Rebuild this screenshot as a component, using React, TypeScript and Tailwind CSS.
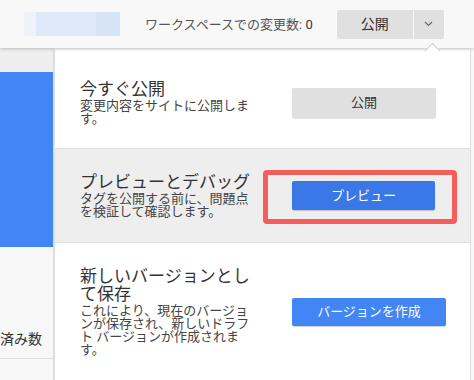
import React from 'react';

const font = { fontFamily: '"Roboto", "Noto Sans CJK JP", sans-serif' };

function Chevron() {
  return (
    <svg width="9" height="6" viewBox="0 0 9 6" className="text-[#666]">
      <polyline points="1,1 4.5,4.5 8,1" fill="none" stroke="currentColor" strokeWidth="1.1" />
    </svg>
  );
}

function TopBar() {
  return (
    <div className="relative z-20 h-[48px] flex items-center bg-[#f8f8f8] shadow-[0_1px_3px_rgba(0,0,0,0.22)]">
      {/* blurred logo */}
      <div className="ml-[24px] flex h-[24px]">
        <div className="w-[12px] bg-[#eef2f9]" />
        <div className="w-[60px] bg-[#dde8f8]" />
        <div className="w-[24px] bg-[#d6e3f7]" />
      </div>
      <div className="ml-[25px] text-[13px] text-[#555] leading-none">
        ワークスペースでの変更数: <span className="text-[#333]">0</span>
      </div>
      <div className="ml-[24px] flex gap-[1px]">
        <button className="w-[76px] h-[29px] rounded-l-[2px] bg-[#e0e0e0] text-[14px] text-[#333]">公開</button>
        <button className="w-[30px] h-[29px] rounded-r-[2px] bg-[#e0e0e0] flex items-center justify-center">
          <Chevron />
        </button>
      </div>
    </div>
  );
}

function Sidebar() {
  return (
    <div className="w-[54px] h-[332px] border-r border-[#ddd] flex flex-col overflow-hidden">
      <div className="h-[24px] bg-[#eeeeee]" />
      <div className="h-[175px] bg-[#4285f4]" />
      <div className="h-[112px] border-b border-[#ddd] flex items-end pb-[12px]">
        <span className="text-[14px] text-[#333] leading-none whitespace-nowrap">済み数</span>
      </div>
    </div>
  );
}

type Section = {
  title: React.ReactNode;
  desc: React.ReactNode;
};

function TextBlock({ title, desc }: Section) {
  return (
    <div className="w-[175px] text-[#333]">
      <div className="text-[17px] leading-[18px]">{title}</div>
      <div className="text-[13px] leading-[13px] text-[#444] mt-[1px]">{desc}</div>
    </div>
  );
}

function PublishPanel() {
  return (
    <div className="absolute z-10 left-[54px] top-[50px] w-[417px] h-[340px] bg-white border-l border-r border-[#ddd]">
      <div className="flex items-center pl-[25px] pt-[30px] pb-[23px] border-b border-[#e0e0e0]">
        <TextBlock title="今すぐ公開" desc={<>変更内容をサイトに公開しま<br />す。</>} />
        <button className="ml-[37px] w-[144px] h-[30px] rounded-[2px] bg-[#e0e0e0] text-[13px] text-[#333] shadow-[0_1px_1px_rgba(0,0,0,0.12)]">
          公開
        </button>
      </div>
      <div className="flex items-center pl-[25px] py-[24px] bg-[#eeeeee] border-b border-[#e0e0e0]">
        <TextBlock title="プレビューとデバッグ" desc={<>タグを公開する前に、問題点<br />を検証して確認します。</>} />
        <div className="relative ml-[37px]">
          <div className="absolute -left-[29px] -right-[22px] -top-[11px] -bottom-[14px] border-[5px] border-[#f55c5c] rounded-[4px]" />
          <button className="w-[143px] h-[29px] rounded-[2px] bg-[#3b78e7] text-[13px] text-white shadow-[0_1px_1px_rgba(0,0,0,0.2)]">
            プレビュー
          </button>
        </div>
      </div>
      <div className="flex items-center pl-[25px] py-[24px]">
        <TextBlock
          title={<>新しいバージョンとし<br />て保存</>}
          desc={<>これにより、現在のバージョ<br />ンが保存され、新しいドラフ<br />ト バージョンが作成されま<br />す。</>}
        />
        <button className="ml-[37px] w-[154px] h-[28px] rounded-[2px] bg-[#4285f4] text-[13px] text-white shadow-[0_1px_1px_rgba(0,0,0,0.2)]">
          バージョンを作成
        </button>
      </div>
    </div>
  );
}

export default function App() {
  return (
    <div className="relative w-[474px] h-[380px] overflow-hidden bg-[#f8f8f8]" style={font}>
      <TopBar />
      <div className="flex">
        <Sidebar />
      </div>
      <PublishPanel />
      {/* caret under dropdown button */}
      <div className="absolute z-30 left-[427px] top-[45px] w-[11px] h-[11px] rotate-45 bg-white border-l border-t border-[#ccc]" />
    </div>
  );
}
